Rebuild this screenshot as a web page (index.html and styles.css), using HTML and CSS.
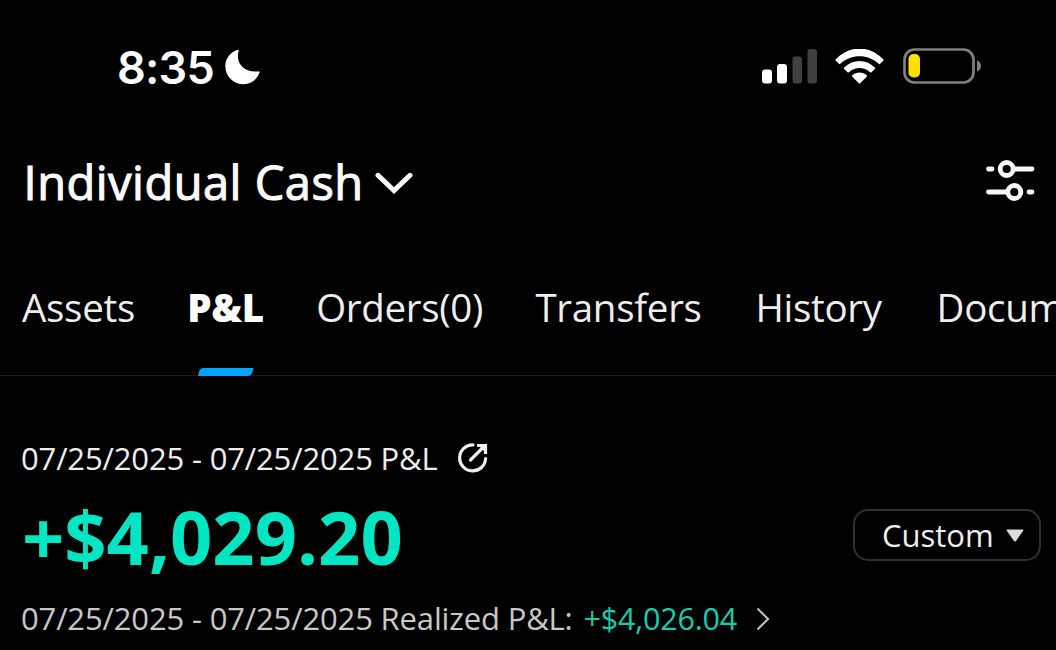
FILE: index.html
```html
<!DOCTYPE html>
<html lang="en">
<head>
<meta charset="utf-8">
<title>P&amp;L</title>
<link rel="stylesheet" href="styles.css">
</head>
<body>
<div class="screen">
  <header class="status">
    <span class="time">8:35</span>
    <svg class="moon" width="36" height="36" viewBox="0 0 36 36"><path d="M12.200 1Q14.200 .2 13.600 2C10.500 13 17.500 23.800 33 22.400Q35.200 22 34.400 24C31.600 30.800 26 35.300 18.700 35.300 8.500 35.300 .3 27.300 .3 17.200.3 9.700 5 3.500 12.200 1Z" fill="#fff"/></svg>
    <svg class="signal" width="56" height="36" viewBox="0 0 56 36"><g fill="#fff"><rect x="0" y="20.500" width="10" height="14" rx="3"/><rect x="15" y="15" width="10" height="19.500" rx="3"/></g><g fill="#404040"><rect x="30.500" y="7.500" width="9.500" height="27" rx="3"/><rect x="45.500" y="0" width="9.500" height="34.500" rx="3"/></g></svg>
    <svg class="wifi" width="50" height="36" viewBox="0 0 50 36"><path d="M.8 10.200C14-4 35-4 48.200 10.200Q49 11 48.200 11.800L45.200 14.800Q44.500 15.500 43.700 14.700C33 4.700 16 4.700 5.300 14.700Q4.500 15.500 3.800 14.800L.8 11.800Q0 11 .8 10.200Z" fill="#fff"/><path d="M9.200 18.400C18 9.800 31 9.800 39.800 18.400Q40.600 19.200 39.800 20L36.500 23.200Q35.800 23.900 35 23.200C28.500 17.700 20.500 17.700 14 23.200Q13.200 23.900 12.500 23.200L9.200 20Q8.400 19.200 9.200 18.400Z" fill="#fff"/><path d="M17.300 26.300C21.500 22.700 27.500 22.700 31.700 26.300Q32.500 27 31.700 27.800L25.200 34.200Q24.500 34.800 23.800 34.200L17.300 27.800Q16.500 27 17.300 26.300Z" fill="#fff"/></svg>
    <svg class="battery" width="80" height="36" viewBox="0 0 80 36"><rect x="1.500" y="1.500" width="69" height="33" rx="10" fill="none" stroke="#808080" stroke-width="2.700"/><rect x="5.500" y="6" width="11.500" height="23.500" rx="5" fill="#ffdf00"/><path d="M74 12.500Q78 14.200 78 18T74 23.500Z" fill="#808080"/></svg>
  </header>
  <div class="account">
    <h1 class="account-name">Individual Cash</h1>
    <svg class="chevron" width="38" height="24" viewBox="0 0 38 24"><path d="M3 3.300 19 18.500 35 3.300" fill="none" stroke="#fff" stroke-width="5" stroke-linecap="round"/></svg>
    <svg class="filter" width="50" height="44" viewBox="0 0 50 44"><g fill="none" stroke="#f8f8f8" stroke-width="4.800" stroke-linecap="round"><path d="M3.500 11H7M30 11H47M3.500 34H21M44 34H47"/><circle cx="21.700" cy="11" r="6.500"/><circle cx="29.300" cy="34" r="6.500"/></g></svg>
  </div>
  <nav class="tabs">
    <a class="tab">Assets</a>
    <a class="tab active">P&amp;L<svg class="marker" width="56" height="8" viewBox="0 0 56 8"><path d="M5 0H55.500L54.500 4Q53.500 8 49.500 8H0L1 4Q2 0 5 0Z" fill="#02a2ff"/></svg></a>
    <a class="tab orders">Orders(0)</a>
    <a class="tab transfers">Transfers</a>
    <a class="tab history">History</a>
    <a class="tab documents">Documents</a>
  </nav>
  <main class="summary">
    <div class="range"><span>07/25/2025 - 07/25/2025 P&amp;L</span>
      <svg class="share" width="30" height="30" viewBox="0 0 30 30"><g fill="none" stroke="#eee" stroke-width="3.200"><path d="M15 1.900A13 13 0 1 0 27.600 15.500" stroke-linecap="round"/><path d="M12.500 17 25 4.500" stroke-linecap="round"/><path d="M19 2.500H27.500V11"/></g><path d="M20 2H28V10Z" fill="#eee"/></svg>
    </div>
    <div class="total-row">
      <strong class="total">+$4,029.20</strong>
      <button class="period"><span>Custom</span><svg width="18" height="13" viewBox="0 0 18 13"><path d="M1.500.5H16.500Q18 .5 17 2L10 12Q9 13 8 12L1 2Q0 .5 1.500.5Z" fill="#ddd"/></svg></button>
    </div>
    <div class="realized"><span class="label">07/25/2025 - 07/25/2025 Realized P&amp;L:</span><span class="gain">+$4,026.04</span>
      <svg class="next" width="14" height="24" viewBox="0 0 14 24"><path d="M1.500 1.500 12 12 1.500 22.500" fill="none" stroke="#bbb" stroke-width="2.200"/></svg>
    </div>
  </main>
</div>
</body>
</html>
```
FILE: styles.css
```css
* { box-sizing: border-box; }
body { margin: 0; background: #000; }
.screen { width: 1056px; height: 650px; overflow: hidden; background: #000; color: #eee; font-family: "Open Sans", "Noto Sans", sans-serif; }
svg { display: block; flex: none; }
span, a, h1, strong { white-space: nowrap; }
.status { display: flex; height: 149px; padding: 49px 0 0 117px; }
.time { width: 108px; font: 600 45px/37px Inter, sans-serif; letter-spacing: -0.8px; color: #fff; }
.signal { margin-left: 501px; }
.wifi { margin-left: 17px; }
.battery { margin: -1px 0 0 18px; }
.account { display: flex; height: 127px; padding-left: 22px; }
.account-name { width: 353px; margin: 0; padding-left: 1.5px; font-size: 47px; font-weight: 400; line-height: 66px; letter-spacing: 0.5px; color: #fafafa; -webkit-text-stroke: 1.1px #fafafa; }
.chevron { margin-top: 23px; }
.filter { margin: 9px 0 0 572px; }
.tabs { display: flex; gap: 52.3px; height: 100px; padding-left: 22px; border-bottom: 1px solid #1b1b1b; }
.tab { flex: none; font-size: 38.5px; line-height: 62px; letter-spacing: -0.3px; }
.active { position: relative; font-weight: 800; color: #fff; }
.marker { position: absolute; left: 10.5px; bottom: -1px; }
.history { margin-left: 1.5px; }
.documents { margin-left: 2.5px; }
.summary { padding: 59px 15px 0 21px; }
.range { display: flex; height: 61px; font-size: 31px; line-height: 46px; letter-spacing: -0.15px; }
.share { margin: 8px 0 0 20px; }
.total-row { display: flex; justify-content: space-between; height: 99px; }
.total { padding-left: 1px; font-size: 74px; line-height: 82px; color: #00e6c3; }
.period { display: flex; align-items: center; width: 188px; height: 52px; margin: 13px 0 0; padding: 0 15px 0 27px; justify-content: space-between; border: 2px solid #303030; border-radius: 15px; background: #000; color: #eee; font: 31px/48px "Open Sans", "Noto Sans", sans-serif; }
.realized { display: flex; font-size: 31px; line-height: 46px; letter-spacing: -0.15px; color: #c8c8c8; }
.gain { margin-left: 11px; font-size: 30.5px; letter-spacing: -0.2px; color: #16cda9; }
.next { margin: 12px 0 0 19px; }
```
